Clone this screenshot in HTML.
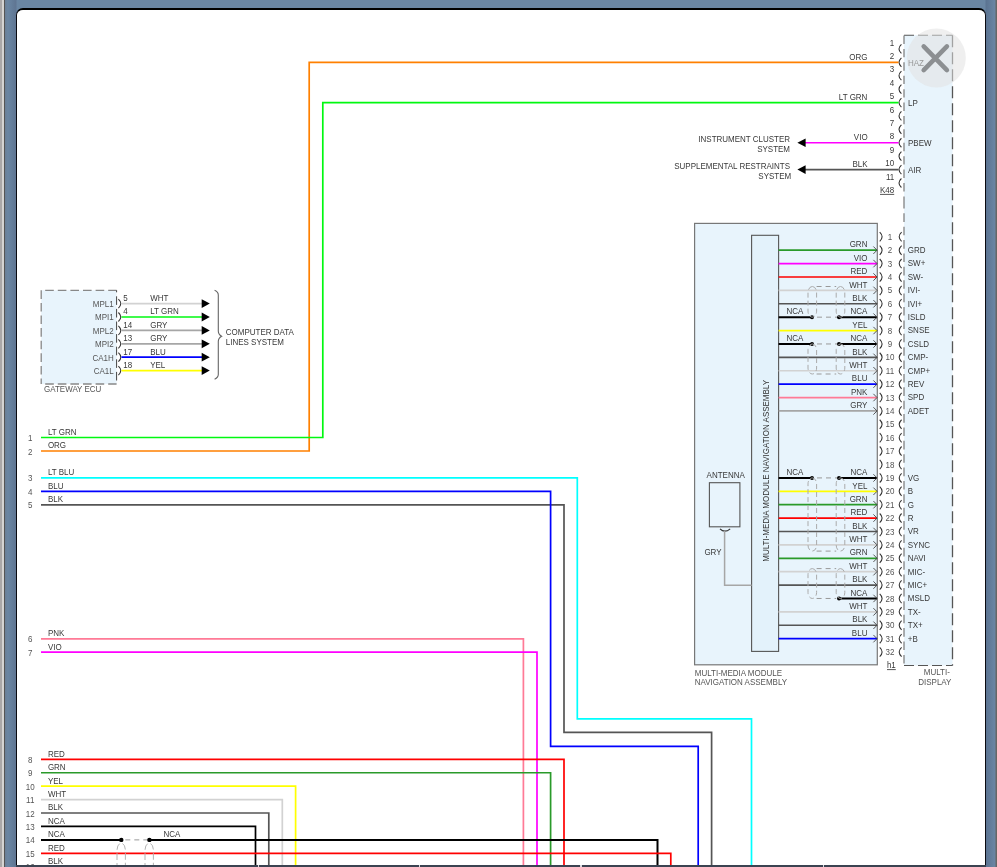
<!DOCTYPE html>
<html><head><meta charset="utf-8"><style>
html,body{margin:0;padding:0;}
body{width:997px;height:867px;overflow:hidden;position:relative;background:linear-gradient(to right,#6a86a3 0px,#6a86a3 8px,#5f7592 16px,#6a86a3 17px,#6a86a3 985px,#5b7391 986px,#6a86a4 995px,#666 996px);font-family:"Liberation Sans",sans-serif;}
#s1{position:absolute;left:0;top:0;width:2px;height:867px;background:#aaa8a8;}
#s2{position:absolute;left:2px;top:0;width:2px;height:867px;background:#d5d4d2;}
#s3{position:absolute;left:4px;top:0;width:1px;height:867px;background:#555;}
#s4{position:absolute;left:5px;top:0;width:3px;height:867px;background:linear-gradient(to right,#6b7f95,#6a86a3);}
#panel{position:absolute;left:16px;top:7.5px;width:968px;height:900px;background:#fff;border:1px solid #0a0a10;border-top:2px solid #000;border-radius:7px 7px 0 0;}
#bar{position:absolute;left:16px;top:865px;width:970px;height:2px;background:#3b4351;}
.gap{position:absolute;top:865px;width:1.5px;height:2px;background:#d8dbe0;}
svg{position:absolute;left:0;top:0;will-change:transform;}
svg text{font-family:"Liberation Sans",sans-serif;}
</style></head><body>
<div id="s1"></div><div id="s2"></div><div id="s3"></div><div id="s4"></div>
<div id="panel"></div>
<svg width="997" height="867" viewBox="0 0 997 867">
<defs><clipPath id="cp"><rect x="17" y="9.5" width="968" height="855.5"/></clipPath></defs>
<g clip-path="url(#cp)">
<rect x="904" y="35.2" width="48.5" height="630.3" fill="#e8f4fc"/>
<path d="M904 35.2 H952.5" stroke="#555" stroke-width="1.1" stroke-dasharray="10 4"/>
<path d="M952.5 35.2 V665.5" stroke="#555" stroke-width="1.3" stroke-dasharray="12 5"/>
<path d="M904 665.5 H952.5" stroke="#555" stroke-width="1.1" stroke-dasharray="10 4"/>
<path d="M904 35.2 V200" stroke="#777" stroke-width="1.2" stroke-dasharray="8.4 5.01" stroke-dashoffset="-0.29"/>
<path d="M904 200 V665.5" stroke="#777" stroke-width="1.2" stroke-dasharray="8.6 4.78" stroke-dashoffset="0.04"/>
<text transform="translate(894.20 45.50) scale(0.9 1)" text-anchor="end" font-size="8.89" fill="#383838" >1</text>
<path d="M901.4 44.40 Q896.6 48.90 901.4 53.40" stroke="#333" stroke-width="1.1" fill="none"/>
<text transform="translate(894.20 58.91) scale(0.9 1)" text-anchor="end" font-size="8.89" fill="#383838" >2</text>
<path d="M901.4 57.81 Q896.6 62.31 901.4 66.81" stroke="#333" stroke-width="1.1" fill="none"/>
<text transform="translate(894.20 72.32) scale(0.9 1)" text-anchor="end" font-size="8.89" fill="#383838" >3</text>
<path d="M901.4 71.22 Q896.6 75.72 901.4 80.22" stroke="#333" stroke-width="1.1" fill="none"/>
<text transform="translate(894.20 85.73) scale(0.9 1)" text-anchor="end" font-size="8.89" fill="#383838" >4</text>
<path d="M901.4 84.63 Q896.6 89.13 901.4 93.63" stroke="#333" stroke-width="1.1" fill="none"/>
<text transform="translate(894.20 99.14) scale(0.9 1)" text-anchor="end" font-size="8.89" fill="#383838" >5</text>
<path d="M901.4 98.04 Q896.6 102.54 901.4 107.04" stroke="#333" stroke-width="1.1" fill="none"/>
<text transform="translate(894.20 112.55) scale(0.9 1)" text-anchor="end" font-size="8.89" fill="#383838" >6</text>
<path d="M901.4 111.45 Q896.6 115.95 901.4 120.45" stroke="#333" stroke-width="1.1" fill="none"/>
<text transform="translate(894.20 125.96) scale(0.9 1)" text-anchor="end" font-size="8.89" fill="#383838" >7</text>
<path d="M901.4 124.86 Q896.6 129.36 901.4 133.86" stroke="#333" stroke-width="1.1" fill="none"/>
<text transform="translate(894.20 139.37) scale(0.9 1)" text-anchor="end" font-size="8.89" fill="#383838" >8</text>
<path d="M901.4 138.27 Q896.6 142.77 901.4 147.27" stroke="#333" stroke-width="1.1" fill="none"/>
<text transform="translate(894.20 152.78) scale(0.9 1)" text-anchor="end" font-size="8.89" fill="#383838" >9</text>
<path d="M901.4 151.68 Q896.6 156.18 901.4 160.68" stroke="#333" stroke-width="1.1" fill="none"/>
<text transform="translate(894.20 166.19) scale(0.9 1)" text-anchor="end" font-size="8.89" fill="#383838" >10</text>
<path d="M901.4 165.09 Q896.6 169.59 901.4 174.09" stroke="#333" stroke-width="1.1" fill="none"/>
<text transform="translate(894.20 179.60) scale(0.9 1)" text-anchor="end" font-size="8.89" fill="#383838" >11</text>
<path d="M901.4 178.50 Q896.6 183.00 901.4 187.50" stroke="#333" stroke-width="1.1" fill="none"/>
<text transform="translate(908.00 65.81) scale(0.9 1)" text-anchor="start" font-size="8.89" fill="#383838" >HAZ</text>
<text transform="translate(908.00 106.04) scale(0.9 1)" text-anchor="start" font-size="8.89" fill="#383838" >LP</text>
<text transform="translate(908.00 146.27) scale(0.9 1)" text-anchor="start" font-size="8.89" fill="#383838" >PBEW</text>
<text transform="translate(908.00 173.09) scale(0.9 1)" text-anchor="start" font-size="8.89" fill="#383838" >AIR</text>
<text transform="translate(894.20 192.60) scale(0.9 1)" text-anchor="end" font-size="8.89" fill="#383838" >K48</text>
<path d="M880 194.4 H894.2" stroke="#444" stroke-width="0.9"/>
<path d="M41 451 H309.2 V62.31 H898.5" stroke="#ff8000" stroke-width="1.7" fill="none" />
<path d="M41 437.5 H322.8 V102.54 H898.5" stroke="#00f810" stroke-width="1.7" fill="none" />
<text transform="translate(867.40 59.51) scale(0.9 1)" text-anchor="end" font-size="8.89" fill="#383838" >ORG</text>
<text transform="translate(867.40 99.74) scale(0.9 1)" text-anchor="end" font-size="8.89" fill="#383838" >LT GRN</text>
<path d="M805 142.77 H898.5" stroke="#ff00ff" stroke-width="1.7" fill="none" />
<path d="M797.4 142.77 L805.6 138.47 L805.6 147.07 Z" fill="#000"/>
<text transform="translate(867.60 139.97) scale(0.9 1)" text-anchor="end" font-size="8.89" fill="#383838" >VIO</text>
<path d="M805 169.59 H898.5" stroke="#555555" stroke-width="1.7" fill="none" />
<path d="M797.4 169.59 L805.6 165.29 L805.6 173.89 Z" fill="#000"/>
<text transform="translate(867.60 166.79) scale(0.9 1)" text-anchor="end" font-size="8.89" fill="#383838" >BLK</text>
<text transform="translate(790.00 142.20) scale(0.9 1)" text-anchor="end" font-size="8.89" fill="#383838" >INSTRUMENT CLUSTER</text>
<text transform="translate(790.00 152.20) scale(0.9 1)" text-anchor="end" font-size="8.89" fill="#383838" >SYSTEM</text>
<text transform="translate(790.00 169.20) scale(0.9 1)" text-anchor="end" font-size="8.89" fill="#383838" >SUPPLEMENTAL RESTRAINTS</text>
<text transform="translate(791.20 179.20) scale(0.9 1)" text-anchor="end" font-size="8.89" fill="#383838" >SYSTEM</text>
<rect x="41.2" y="290.3" width="75.4" height="93.7" fill="#e8f4fc"/>
<path d="M41.2 290.3 H116.6" stroke="#888" stroke-width="1.3" stroke-dasharray="8.6 4" stroke-dashoffset="-4"/>
<path d="M41.2 384 H116.6" stroke="#888" stroke-width="1.3" stroke-dasharray="8.6 4" stroke-dashoffset="-4"/>
<path d="M41.2 290.3 V384" stroke="#888" stroke-width="1.3" stroke-dasharray="8.6 4"/>
<path d="M116.6 290.3 V384" stroke="#444" stroke-width="1" stroke-dasharray="8.6 4" stroke-dashoffset="-6"/>
<text transform="translate(113.70 306.90) scale(0.9 1)" text-anchor="end" font-size="8.89" fill="#555" >MPL1</text>
<path d="M118.4 299.10 Q123.2 303.60 118.4 308.10" stroke="#333" stroke-width="1.1" fill="none"/>
<path d="M121.5 303.60 H203" stroke="#d2d2d2" stroke-width="1.7" fill="none" />
<path d="M209.8 303.60 L201.7 299.20 L201.7 308.00 Z" fill="#000"/>
<text transform="translate(123.30 301.00) scale(0.9 1)" text-anchor="start" font-size="8.89" fill="#383838" >5</text>
<text transform="translate(150.20 301.00) scale(0.9 1)" text-anchor="start" font-size="8.89" fill="#383838" >WHT</text>
<text transform="translate(113.70 320.30) scale(0.9 1)" text-anchor="end" font-size="8.89" fill="#555" >MPI1</text>
<path d="M118.4 312.50 Q123.2 317.00 118.4 321.50" stroke="#333" stroke-width="1.1" fill="none"/>
<path d="M121.5 317.00 H203" stroke="#00f810" stroke-width="1.7" fill="none" />
<path d="M209.8 317.00 L201.7 312.60 L201.7 321.40 Z" fill="#000"/>
<text transform="translate(123.30 314.40) scale(0.9 1)" text-anchor="start" font-size="8.89" fill="#383838" >4</text>
<text transform="translate(150.20 314.40) scale(0.9 1)" text-anchor="start" font-size="8.89" fill="#383838" >LT GRN</text>
<text transform="translate(113.70 333.70) scale(0.9 1)" text-anchor="end" font-size="8.89" fill="#555" >MPL2</text>
<path d="M118.4 325.90 Q123.2 330.40 118.4 334.90" stroke="#333" stroke-width="1.1" fill="none"/>
<path d="M121.5 330.40 H203" stroke="#a6a6a6" stroke-width="1.7" fill="none" />
<path d="M209.8 330.40 L201.7 326.00 L201.7 334.80 Z" fill="#000"/>
<text transform="translate(123.30 327.80) scale(0.9 1)" text-anchor="start" font-size="8.89" fill="#383838" >14</text>
<text transform="translate(150.20 327.80) scale(0.9 1)" text-anchor="start" font-size="8.89" fill="#383838" >GRY</text>
<text transform="translate(113.70 347.10) scale(0.9 1)" text-anchor="end" font-size="8.89" fill="#555" >MPI2</text>
<path d="M118.4 339.30 Q123.2 343.80 118.4 348.30" stroke="#333" stroke-width="1.1" fill="none"/>
<path d="M121.5 343.80 H203" stroke="#a6a6a6" stroke-width="1.7" fill="none" />
<path d="M209.8 343.80 L201.7 339.40 L201.7 348.20 Z" fill="#000"/>
<text transform="translate(123.30 341.20) scale(0.9 1)" text-anchor="start" font-size="8.89" fill="#383838" >13</text>
<text transform="translate(150.20 341.20) scale(0.9 1)" text-anchor="start" font-size="8.89" fill="#383838" >GRY</text>
<text transform="translate(113.70 360.50) scale(0.9 1)" text-anchor="end" font-size="8.89" fill="#555" >CA1H</text>
<path d="M118.4 352.70 Q123.2 357.20 118.4 361.70" stroke="#333" stroke-width="1.1" fill="none"/>
<path d="M121.5 357.20 H203" stroke="#0000ff" stroke-width="1.7" fill="none" />
<path d="M209.8 357.20 L201.7 352.80 L201.7 361.60 Z" fill="#000"/>
<text transform="translate(123.30 354.60) scale(0.9 1)" text-anchor="start" font-size="8.89" fill="#383838" >17</text>
<text transform="translate(150.20 354.60) scale(0.9 1)" text-anchor="start" font-size="8.89" fill="#383838" >BLU</text>
<text transform="translate(113.70 373.90) scale(0.9 1)" text-anchor="end" font-size="8.89" fill="#555" >CA1L</text>
<path d="M118.4 366.10 Q123.2 370.60 118.4 375.10" stroke="#333" stroke-width="1.1" fill="none"/>
<path d="M121.5 370.60 H203" stroke="#ffff00" stroke-width="1.7" fill="none" />
<path d="M209.8 370.60 L201.7 366.20 L201.7 375.00 Z" fill="#000"/>
<text transform="translate(123.30 368.00) scale(0.9 1)" text-anchor="start" font-size="8.89" fill="#383838" >18</text>
<text transform="translate(150.20 368.00) scale(0.9 1)" text-anchor="start" font-size="8.89" fill="#383838" >YEL</text>
<path d="M214.6 290.3 Q218.3 292 218.3 295 V331 Q218.3 334.5 221.6 336.2 Q218.3 338 218.3 341.5 V374.5 Q218.3 377.5 214.6 379.2" stroke="#666" stroke-width="1.1" fill="none"/>
<text transform="translate(225.80 335.00) scale(0.9 1)" text-anchor="start" font-size="8.89" fill="#383838" >COMPUTER DATA</text>
<text transform="translate(225.80 344.60) scale(0.9 1)" text-anchor="start" font-size="8.89" fill="#383838" >LINES SYSTEM</text>
<text transform="translate(44.00 391.50) scale(0.9 1)" text-anchor="start" font-size="8.89" fill="#555" >GATEWAY ECU</text>
<text transform="translate(30.20 441.10) scale(0.9 1)" text-anchor="middle" font-size="8.89" fill="#555" >1</text>
<text transform="translate(47.90 434.90) scale(0.9 1)" text-anchor="start" font-size="8.89" fill="#383838" >LT GRN</text>
<text transform="translate(30.20 454.60) scale(0.9 1)" text-anchor="middle" font-size="8.89" fill="#555" >2</text>
<text transform="translate(47.90 448.40) scale(0.9 1)" text-anchor="start" font-size="8.89" fill="#383838" >ORG</text>
<text transform="translate(30.20 481.40) scale(0.9 1)" text-anchor="middle" font-size="8.89" fill="#555" >3</text>
<text transform="translate(47.90 475.20) scale(0.9 1)" text-anchor="start" font-size="8.89" fill="#383838" >LT BLU</text>
<text transform="translate(30.20 494.90) scale(0.9 1)" text-anchor="middle" font-size="8.89" fill="#555" >4</text>
<text transform="translate(47.90 488.70) scale(0.9 1)" text-anchor="start" font-size="8.89" fill="#383838" >BLU</text>
<text transform="translate(30.20 508.40) scale(0.9 1)" text-anchor="middle" font-size="8.89" fill="#555" >5</text>
<text transform="translate(47.90 502.20) scale(0.9 1)" text-anchor="start" font-size="8.89" fill="#383838" >BLK</text>
<text transform="translate(30.20 642.40) scale(0.9 1)" text-anchor="middle" font-size="8.89" fill="#555" >6</text>
<text transform="translate(47.90 636.20) scale(0.9 1)" text-anchor="start" font-size="8.89" fill="#383838" >PNK</text>
<text transform="translate(30.20 655.70) scale(0.9 1)" text-anchor="middle" font-size="8.89" fill="#555" >7</text>
<text transform="translate(47.90 649.50) scale(0.9 1)" text-anchor="start" font-size="8.89" fill="#383838" >VIO</text>
<text transform="translate(30.20 762.90) scale(0.9 1)" text-anchor="middle" font-size="8.89" fill="#555" >8</text>
<text transform="translate(47.90 756.70) scale(0.9 1)" text-anchor="start" font-size="8.89" fill="#383838" >RED</text>
<text transform="translate(30.20 776.33) scale(0.9 1)" text-anchor="middle" font-size="8.89" fill="#555" >9</text>
<text transform="translate(47.90 770.13) scale(0.9 1)" text-anchor="start" font-size="8.89" fill="#383838" >GRN</text>
<text transform="translate(30.20 789.76) scale(0.9 1)" text-anchor="middle" font-size="8.89" fill="#555" >10</text>
<text transform="translate(47.90 783.56) scale(0.9 1)" text-anchor="start" font-size="8.89" fill="#383838" >YEL</text>
<text transform="translate(30.20 803.19) scale(0.9 1)" text-anchor="middle" font-size="8.89" fill="#555" >11</text>
<text transform="translate(47.90 796.99) scale(0.9 1)" text-anchor="start" font-size="8.89" fill="#383838" >WHT</text>
<text transform="translate(30.20 816.62) scale(0.9 1)" text-anchor="middle" font-size="8.89" fill="#555" >12</text>
<text transform="translate(47.90 810.42) scale(0.9 1)" text-anchor="start" font-size="8.89" fill="#383838" >BLK</text>
<text transform="translate(30.20 830.05) scale(0.9 1)" text-anchor="middle" font-size="8.89" fill="#555" >13</text>
<text transform="translate(47.90 823.85) scale(0.9 1)" text-anchor="start" font-size="8.89" fill="#383838" >NCA</text>
<text transform="translate(30.20 843.48) scale(0.9 1)" text-anchor="middle" font-size="8.89" fill="#555" >14</text>
<text transform="translate(47.90 837.28) scale(0.9 1)" text-anchor="start" font-size="8.89" fill="#383838" >NCA</text>
<text transform="translate(30.20 856.91) scale(0.9 1)" text-anchor="middle" font-size="8.89" fill="#555" >15</text>
<text transform="translate(47.90 850.71) scale(0.9 1)" text-anchor="start" font-size="8.89" fill="#383838" >RED</text>
<text transform="translate(30.20 870.34) scale(0.9 1)" text-anchor="middle" font-size="8.89" fill="#555" >16</text>
<text transform="translate(47.90 864.14) scale(0.9 1)" text-anchor="start" font-size="8.89" fill="#383838" >BLK</text>
<path d="M41 477.8 H577.3 V718.8 H751.5 V870" stroke="#00ffff" stroke-width="1.7" fill="none" />
<path d="M41 504.8 H564 V732.4 H711.6 V870" stroke="#555555" stroke-width="1.7" fill="none" />
<path d="M41 491.3 H550.6 V746.3 H698.2 V870" stroke="#0000ff" stroke-width="1.7" fill="none" />
<path d="M41 638.8 H523.4 V870" stroke="#ff7a96" stroke-width="1.7" fill="none" />
<path d="M41 652.1 H537 V870" stroke="#ff00ff" stroke-width="1.7" fill="none" />
<path d="M41 759.30 H564 V870" stroke="#ff0000" stroke-width="1.7" fill="none" />
<path d="M41 772.73 H550.6 V870" stroke="#2a9a2a" stroke-width="1.7" fill="none" />
<path d="M41 786.16 H295.6 V870" stroke="#ffff00" stroke-width="1.7" fill="none" />
<path d="M41 799.59 H282.3 V870" stroke="#d2d2d2" stroke-width="1.7" fill="none" />
<path d="M41 813.02 H268.8 V870" stroke="#555555" stroke-width="1.7" fill="none" />
<path d="M41 826.45 H255.5 V870" stroke="#000000" stroke-width="1.7" fill="none" />
<path d="M41 839.88 H121.3" stroke="#000000" stroke-width="2" fill="none" />
<path d="M149.4 839.88 H657.5 V870" stroke="#000000" stroke-width="2" fill="none" />
<path d="M121.3 839.88 H149.4" stroke="#999" stroke-width="1" stroke-dasharray="5 4" stroke-dashoffset="-4"/>
<circle cx="121.3" cy="839.88" r="2.2" fill="#000"/><circle cx="149.4" cy="839.88" r="2.2" fill="#000"/>
<path d="M41 853.31 H670.8 V870" stroke="#ff0000" stroke-width="1.7" fill="none" />
<path d="M41 866.74 H700" stroke="#555555" stroke-width="1.7" fill="none" />
<text transform="translate(163.40 837.30) scale(0.9 1)" text-anchor="start" font-size="8.89" fill="#383838" >NCA</text>
<path d="M117 870 V851 Q117 844 121.2 843 Q125.4 844 125.4 851 V870" stroke="#aaa" stroke-width="0.9" fill="none" stroke-dasharray="7 3"/>
<path d="M145 870 V851 Q145 844 149.2 843 Q153.4 844 153.4 851 V870" stroke="#aaa" stroke-width="0.9" fill="none" stroke-dasharray="7 3"/>
<rect x="694.6" y="223.4" width="182.7" height="441.4" fill="#e8f4fc" stroke="#777" stroke-width="1.2"/>
<rect x="751.6" y="235.3" width="27" height="416.1" fill="#e3f2fb" stroke="#555" stroke-width="1.1"/>
<text transform="translate(769.2 561.7) rotate(-90) scale(0.9 1)" font-size="8.89" fill="#333">MULTI-MEDIA MODULE NAVIGATION ASSEMBLY</text>
<text transform="translate(694.80 676.00) scale(0.9 1)" text-anchor="start" font-size="8.89" fill="#555" >MULTI-MEDIA MODULE</text>
<text transform="translate(694.80 684.60) scale(0.9 1)" text-anchor="start" font-size="8.89" fill="#555" >NAVIGATION ASSEMBLY</text>
<text transform="translate(949.80 675.30) scale(0.9 1)" text-anchor="end" font-size="8.89" fill="#555" >MULTI-</text>
<text transform="translate(951.40 684.80) scale(0.9 1)" text-anchor="end" font-size="8.89" fill="#555" >DISPLAY</text>
<text transform="translate(895.80 667.70) scale(0.9 1)" text-anchor="end" font-size="8.89" fill="#383838" >h1</text>
<path d="M887 669.6 H895.8" stroke="#444" stroke-width="0.9"/>
<text transform="translate(706.60 477.80) scale(0.9 1)" text-anchor="start" font-size="8.89" fill="#383838" >ANTENNA</text>
<rect x="709.4" y="482.7" width="30.5" height="44.1" fill="#e8f4fc" stroke="#555" stroke-width="1.1"/>
<path d="M720 528.8 Q724.6 533.5 730.2 528.8" stroke="#333" stroke-width="1.1" fill="none"/>
<path d="M724.6 531 V585.2 H751.6" stroke="#a6a6a6" stroke-width="1.5" fill="none" />
<text transform="translate(704.40 555.30) scale(0.9 1)" text-anchor="start" font-size="8.89" fill="#383838" >GRY</text>
<path d="M879.7 232.20 Q884.5 236.80 879.7 241.40" stroke="#333" stroke-width="1.1" fill="none"/>
<path d="M901.6 232.20 Q896.8 236.80 901.6 241.40" stroke="#333" stroke-width="1.1" fill="none"/>
<text transform="translate(890.00 239.90) scale(0.9 1)" text-anchor="middle" font-size="8.89" fill="#555" >1</text>
<path d="M879.7 245.60 Q884.5 250.20 879.7 254.80" stroke="#333" stroke-width="1.1" fill="none"/>
<path d="M901.6 245.60 Q896.8 250.20 901.6 254.80" stroke="#333" stroke-width="1.1" fill="none"/>
<text transform="translate(890.00 253.30) scale(0.9 1)" text-anchor="middle" font-size="8.89" fill="#555" >2</text>
<path d="M879.7 258.99 Q884.5 263.59 879.7 268.19" stroke="#333" stroke-width="1.1" fill="none"/>
<path d="M901.6 258.99 Q896.8 263.59 901.6 268.19" stroke="#333" stroke-width="1.1" fill="none"/>
<text transform="translate(890.00 266.69) scale(0.9 1)" text-anchor="middle" font-size="8.89" fill="#555" >3</text>
<path d="M879.7 272.38 Q884.5 276.99 879.7 281.59" stroke="#333" stroke-width="1.1" fill="none"/>
<path d="M901.6 272.38 Q896.8 276.99 901.6 281.59" stroke="#333" stroke-width="1.1" fill="none"/>
<text transform="translate(890.00 280.09) scale(0.9 1)" text-anchor="middle" font-size="8.89" fill="#555" >4</text>
<path d="M879.7 285.78 Q884.5 290.38 879.7 294.98" stroke="#333" stroke-width="1.1" fill="none"/>
<path d="M901.6 285.78 Q896.8 290.38 901.6 294.98" stroke="#333" stroke-width="1.1" fill="none"/>
<text transform="translate(890.00 293.48) scale(0.9 1)" text-anchor="middle" font-size="8.89" fill="#555" >5</text>
<path d="M879.7 299.17 Q884.5 303.77 879.7 308.38" stroke="#333" stroke-width="1.1" fill="none"/>
<path d="M901.6 299.17 Q896.8 303.77 901.6 308.38" stroke="#333" stroke-width="1.1" fill="none"/>
<text transform="translate(890.00 306.88) scale(0.9 1)" text-anchor="middle" font-size="8.89" fill="#555" >6</text>
<path d="M879.7 312.57 Q884.5 317.17 879.7 321.77" stroke="#333" stroke-width="1.1" fill="none"/>
<path d="M901.6 312.57 Q896.8 317.17 901.6 321.77" stroke="#333" stroke-width="1.1" fill="none"/>
<text transform="translate(890.00 320.27) scale(0.9 1)" text-anchor="middle" font-size="8.89" fill="#555" >7</text>
<path d="M879.7 325.96 Q884.5 330.56 879.7 335.17" stroke="#333" stroke-width="1.1" fill="none"/>
<path d="M901.6 325.96 Q896.8 330.56 901.6 335.17" stroke="#333" stroke-width="1.1" fill="none"/>
<text transform="translate(890.00 333.67) scale(0.9 1)" text-anchor="middle" font-size="8.89" fill="#555" >8</text>
<path d="M879.7 339.36 Q884.5 343.96 879.7 348.56" stroke="#333" stroke-width="1.1" fill="none"/>
<path d="M901.6 339.36 Q896.8 343.96 901.6 348.56" stroke="#333" stroke-width="1.1" fill="none"/>
<text transform="translate(890.00 347.06) scale(0.9 1)" text-anchor="middle" font-size="8.89" fill="#555" >9</text>
<path d="M879.7 352.75 Q884.5 357.36 879.7 361.96" stroke="#333" stroke-width="1.1" fill="none"/>
<path d="M901.6 352.75 Q896.8 357.36 901.6 361.96" stroke="#333" stroke-width="1.1" fill="none"/>
<text transform="translate(890.00 360.46) scale(0.9 1)" text-anchor="middle" font-size="8.89" fill="#555" >10</text>
<path d="M879.7 366.15 Q884.5 370.75 879.7 375.35" stroke="#333" stroke-width="1.1" fill="none"/>
<path d="M901.6 366.15 Q896.8 370.75 901.6 375.35" stroke="#333" stroke-width="1.1" fill="none"/>
<text transform="translate(890.00 373.85) scale(0.9 1)" text-anchor="middle" font-size="8.89" fill="#555" >11</text>
<path d="M879.7 379.54 Q884.5 384.14 879.7 388.75" stroke="#333" stroke-width="1.1" fill="none"/>
<path d="M901.6 379.54 Q896.8 384.14 901.6 388.75" stroke="#333" stroke-width="1.1" fill="none"/>
<text transform="translate(890.00 387.25) scale(0.9 1)" text-anchor="middle" font-size="8.89" fill="#555" >12</text>
<path d="M879.7 392.94 Q884.5 397.54 879.7 402.14" stroke="#333" stroke-width="1.1" fill="none"/>
<path d="M901.6 392.94 Q896.8 397.54 901.6 402.14" stroke="#333" stroke-width="1.1" fill="none"/>
<text transform="translate(890.00 400.64) scale(0.9 1)" text-anchor="middle" font-size="8.89" fill="#555" >13</text>
<path d="M879.7 406.33 Q884.5 410.94 879.7 415.54" stroke="#333" stroke-width="1.1" fill="none"/>
<path d="M901.6 406.33 Q896.8 410.94 901.6 415.54" stroke="#333" stroke-width="1.1" fill="none"/>
<text transform="translate(890.00 414.04) scale(0.9 1)" text-anchor="middle" font-size="8.89" fill="#555" >14</text>
<path d="M879.7 419.73 Q884.5 424.33 879.7 428.93" stroke="#333" stroke-width="1.1" fill="none"/>
<path d="M901.6 419.73 Q896.8 424.33 901.6 428.93" stroke="#333" stroke-width="1.1" fill="none"/>
<text transform="translate(890.00 427.43) scale(0.9 1)" text-anchor="middle" font-size="8.89" fill="#555" >15</text>
<path d="M879.7 433.12 Q884.5 437.73 879.7 442.33" stroke="#333" stroke-width="1.1" fill="none"/>
<path d="M901.6 433.12 Q896.8 437.73 901.6 442.33" stroke="#333" stroke-width="1.1" fill="none"/>
<text transform="translate(890.00 440.83) scale(0.9 1)" text-anchor="middle" font-size="8.89" fill="#555" >16</text>
<path d="M879.7 446.52 Q884.5 451.12 879.7 455.72" stroke="#333" stroke-width="1.1" fill="none"/>
<path d="M901.6 446.52 Q896.8 451.12 901.6 455.72" stroke="#333" stroke-width="1.1" fill="none"/>
<text transform="translate(890.00 454.22) scale(0.9 1)" text-anchor="middle" font-size="8.89" fill="#555" >17</text>
<path d="M879.7 459.91 Q884.5 464.51 879.7 469.12" stroke="#333" stroke-width="1.1" fill="none"/>
<path d="M901.6 459.91 Q896.8 464.51 901.6 469.12" stroke="#333" stroke-width="1.1" fill="none"/>
<text transform="translate(890.00 467.62) scale(0.9 1)" text-anchor="middle" font-size="8.89" fill="#555" >18</text>
<path d="M879.7 473.31 Q884.5 477.91 879.7 482.51" stroke="#333" stroke-width="1.1" fill="none"/>
<path d="M901.6 473.31 Q896.8 477.91 901.6 482.51" stroke="#333" stroke-width="1.1" fill="none"/>
<text transform="translate(890.00 481.01) scale(0.9 1)" text-anchor="middle" font-size="8.89" fill="#555" >19</text>
<path d="M879.7 486.70 Q884.5 491.31 879.7 495.91" stroke="#333" stroke-width="1.1" fill="none"/>
<path d="M901.6 486.70 Q896.8 491.31 901.6 495.91" stroke="#333" stroke-width="1.1" fill="none"/>
<text transform="translate(890.00 494.41) scale(0.9 1)" text-anchor="middle" font-size="8.89" fill="#555" >20</text>
<path d="M879.7 500.10 Q884.5 504.70 879.7 509.30" stroke="#333" stroke-width="1.1" fill="none"/>
<path d="M901.6 500.10 Q896.8 504.70 901.6 509.30" stroke="#333" stroke-width="1.1" fill="none"/>
<text transform="translate(890.00 507.80) scale(0.9 1)" text-anchor="middle" font-size="8.89" fill="#555" >21</text>
<path d="M879.7 513.50 Q884.5 518.10 879.7 522.70" stroke="#333" stroke-width="1.1" fill="none"/>
<path d="M901.6 513.50 Q896.8 518.10 901.6 522.70" stroke="#333" stroke-width="1.1" fill="none"/>
<text transform="translate(890.00 521.20) scale(0.9 1)" text-anchor="middle" font-size="8.89" fill="#555" >22</text>
<path d="M879.7 526.89 Q884.5 531.49 879.7 536.09" stroke="#333" stroke-width="1.1" fill="none"/>
<path d="M901.6 526.89 Q896.8 531.49 901.6 536.09" stroke="#333" stroke-width="1.1" fill="none"/>
<text transform="translate(890.00 534.59) scale(0.9 1)" text-anchor="middle" font-size="8.89" fill="#555" >23</text>
<path d="M879.7 540.28 Q884.5 544.88 879.7 549.49" stroke="#333" stroke-width="1.1" fill="none"/>
<path d="M901.6 540.28 Q896.8 544.88 901.6 549.49" stroke="#333" stroke-width="1.1" fill="none"/>
<text transform="translate(890.00 547.99) scale(0.9 1)" text-anchor="middle" font-size="8.89" fill="#555" >24</text>
<path d="M879.7 553.68 Q884.5 558.28 879.7 562.88" stroke="#333" stroke-width="1.1" fill="none"/>
<path d="M901.6 553.68 Q896.8 558.28 901.6 562.88" stroke="#333" stroke-width="1.1" fill="none"/>
<text transform="translate(890.00 561.38) scale(0.9 1)" text-anchor="middle" font-size="8.89" fill="#555" >25</text>
<path d="M879.7 567.07 Q884.5 571.67 879.7 576.27" stroke="#333" stroke-width="1.1" fill="none"/>
<path d="M901.6 567.07 Q896.8 571.67 901.6 576.27" stroke="#333" stroke-width="1.1" fill="none"/>
<text transform="translate(890.00 574.77) scale(0.9 1)" text-anchor="middle" font-size="8.89" fill="#555" >26</text>
<path d="M879.7 580.47 Q884.5 585.07 879.7 589.67" stroke="#333" stroke-width="1.1" fill="none"/>
<path d="M901.6 580.47 Q896.8 585.07 901.6 589.67" stroke="#333" stroke-width="1.1" fill="none"/>
<text transform="translate(890.00 588.17) scale(0.9 1)" text-anchor="middle" font-size="8.89" fill="#555" >27</text>
<path d="M879.7 593.86 Q884.5 598.46 879.7 603.06" stroke="#333" stroke-width="1.1" fill="none"/>
<path d="M901.6 593.86 Q896.8 598.46 901.6 603.06" stroke="#333" stroke-width="1.1" fill="none"/>
<text transform="translate(890.00 601.56) scale(0.9 1)" text-anchor="middle" font-size="8.89" fill="#555" >28</text>
<path d="M879.7 607.26 Q884.5 611.86 879.7 616.46" stroke="#333" stroke-width="1.1" fill="none"/>
<path d="M901.6 607.26 Q896.8 611.86 901.6 616.46" stroke="#333" stroke-width="1.1" fill="none"/>
<text transform="translate(890.00 614.96) scale(0.9 1)" text-anchor="middle" font-size="8.89" fill="#555" >29</text>
<path d="M879.7 620.65 Q884.5 625.25 879.7 629.86" stroke="#333" stroke-width="1.1" fill="none"/>
<path d="M901.6 620.65 Q896.8 625.25 901.6 629.86" stroke="#333" stroke-width="1.1" fill="none"/>
<text transform="translate(890.00 628.36) scale(0.9 1)" text-anchor="middle" font-size="8.89" fill="#555" >30</text>
<path d="M879.7 634.05 Q884.5 638.65 879.7 643.25" stroke="#333" stroke-width="1.1" fill="none"/>
<path d="M901.6 634.05 Q896.8 638.65 901.6 643.25" stroke="#333" stroke-width="1.1" fill="none"/>
<text transform="translate(890.00 641.75) scale(0.9 1)" text-anchor="middle" font-size="8.89" fill="#555" >31</text>
<path d="M879.7 647.45 Q884.5 652.05 879.7 656.65" stroke="#333" stroke-width="1.1" fill="none"/>
<path d="M901.6 647.45 Q896.8 652.05 901.6 656.65" stroke="#333" stroke-width="1.1" fill="none"/>
<text transform="translate(890.00 655.15) scale(0.9 1)" text-anchor="middle" font-size="8.89" fill="#555" >32</text>
<text transform="translate(907.80 253.10) scale(0.9 1)" text-anchor="start" font-size="8.89" fill="#383838" >GRD</text>
<text transform="translate(907.80 266.49) scale(0.9 1)" text-anchor="start" font-size="8.89" fill="#383838" >SW+</text>
<text transform="translate(907.80 279.88) scale(0.9 1)" text-anchor="start" font-size="8.89" fill="#383838" >SW-</text>
<text transform="translate(907.80 293.28) scale(0.9 1)" text-anchor="start" font-size="8.89" fill="#383838" >IVI-</text>
<text transform="translate(907.80 306.67) scale(0.9 1)" text-anchor="start" font-size="8.89" fill="#383838" >IVI+</text>
<text transform="translate(907.80 320.07) scale(0.9 1)" text-anchor="start" font-size="8.89" fill="#383838" >ISLD</text>
<text transform="translate(907.80 333.46) scale(0.9 1)" text-anchor="start" font-size="8.89" fill="#383838" >SNSE</text>
<text transform="translate(907.80 346.86) scale(0.9 1)" text-anchor="start" font-size="8.89" fill="#383838" >CSLD</text>
<text transform="translate(907.80 360.25) scale(0.9 1)" text-anchor="start" font-size="8.89" fill="#383838" >CMP-</text>
<text transform="translate(907.80 373.65) scale(0.9 1)" text-anchor="start" font-size="8.89" fill="#383838" >CMP+</text>
<text transform="translate(907.80 387.04) scale(0.9 1)" text-anchor="start" font-size="8.89" fill="#383838" >REV</text>
<text transform="translate(907.80 400.44) scale(0.9 1)" text-anchor="start" font-size="8.89" fill="#383838" >SPD</text>
<text transform="translate(907.80 413.83) scale(0.9 1)" text-anchor="start" font-size="8.89" fill="#383838" >ADET</text>
<text transform="translate(907.80 480.81) scale(0.9 1)" text-anchor="start" font-size="8.89" fill="#383838" >VG</text>
<text transform="translate(907.80 494.20) scale(0.9 1)" text-anchor="start" font-size="8.89" fill="#383838" >B</text>
<text transform="translate(907.80 507.60) scale(0.9 1)" text-anchor="start" font-size="8.89" fill="#383838" >G</text>
<text transform="translate(907.80 521.00) scale(0.9 1)" text-anchor="start" font-size="8.89" fill="#383838" >R</text>
<text transform="translate(907.80 534.39) scale(0.9 1)" text-anchor="start" font-size="8.89" fill="#383838" >VR</text>
<text transform="translate(907.80 547.78) scale(0.9 1)" text-anchor="start" font-size="8.89" fill="#383838" >SYNC</text>
<text transform="translate(907.80 561.18) scale(0.9 1)" text-anchor="start" font-size="8.89" fill="#383838" >NAVI</text>
<text transform="translate(907.80 574.57) scale(0.9 1)" text-anchor="start" font-size="8.89" fill="#383838" >MIC-</text>
<text transform="translate(907.80 587.97) scale(0.9 1)" text-anchor="start" font-size="8.89" fill="#383838" >MIC+</text>
<text transform="translate(907.80 601.36) scale(0.9 1)" text-anchor="start" font-size="8.89" fill="#383838" >MSLD</text>
<text transform="translate(907.80 614.76) scale(0.9 1)" text-anchor="start" font-size="8.89" fill="#383838" >TX-</text>
<text transform="translate(907.80 628.15) scale(0.9 1)" text-anchor="start" font-size="8.89" fill="#383838" >TX+</text>
<text transform="translate(907.80 641.55) scale(0.9 1)" text-anchor="start" font-size="8.89" fill="#383838" >+B</text>
<path d="M778.6 250.20 H877" stroke="#2a9a2a" stroke-width="1.7" fill="none" />
<path d="M873.4 246.50 L877 250.20 L873.4 253.90" stroke="#444" stroke-width="0.9" fill="none"/>
<text transform="translate(867.40 247.40) scale(0.9 1)" text-anchor="end" font-size="8.89" fill="#383838" >GRN</text>
<path d="M778.6 263.59 H877" stroke="#ff00ff" stroke-width="1.7" fill="none" />
<path d="M873.4 259.89 L877 263.59 L873.4 267.29" stroke="#444" stroke-width="0.9" fill="none"/>
<text transform="translate(867.40 260.79) scale(0.9 1)" text-anchor="end" font-size="8.89" fill="#383838" >VIO</text>
<path d="M778.6 276.99 H877" stroke="#ff0000" stroke-width="1.7" fill="none" />
<path d="M873.4 273.29 L877 276.99 L873.4 280.69" stroke="#444" stroke-width="0.9" fill="none"/>
<text transform="translate(867.40 274.19) scale(0.9 1)" text-anchor="end" font-size="8.89" fill="#383838" >RED</text>
<path d="M778.6 290.38 H877" stroke="#d2d2d2" stroke-width="1.7" fill="none" />
<path d="M873.4 286.68 L877 290.38 L873.4 294.08" stroke="#444" stroke-width="0.9" fill="none"/>
<text transform="translate(867.40 287.58) scale(0.9 1)" text-anchor="end" font-size="8.89" fill="#383838" >WHT</text>
<path d="M778.6 303.77 H877" stroke="#555555" stroke-width="1.7" fill="none" />
<path d="M873.4 300.07 L877 303.77 L873.4 307.47" stroke="#444" stroke-width="0.9" fill="none"/>
<text transform="translate(867.40 300.97) scale(0.9 1)" text-anchor="end" font-size="8.89" fill="#383838" >BLK</text>
<path d="M778.6 317.17 H812" stroke="#000" stroke-width="2" fill="none" />
<text transform="translate(786.50 314.37) scale(0.9 1)" text-anchor="start" font-size="8.89" fill="#383838" >NCA</text>
<circle cx="812" cy="317.17" r="2" fill="#000"/>
<path d="M814 317.17 H837" stroke="#999" stroke-width="1" stroke-dasharray="5 4" stroke-dashoffset="-3"/>
<path d="M839 317.17 H877" stroke="#000" stroke-width="2" fill="none" />
<circle cx="839" cy="317.17" r="2" fill="#000"/>
<path d="M873.4 313.47 L877 317.17 L873.4 320.87" stroke="#444" stroke-width="0.9" fill="none"/>
<text transform="translate(867.40 314.37) scale(0.9 1)" text-anchor="end" font-size="8.89" fill="#383838" >NCA</text>
<path d="M778.6 330.56 H877" stroke="#ffff00" stroke-width="1.7" fill="none" />
<path d="M873.4 326.87 L877 330.56 L873.4 334.26" stroke="#444" stroke-width="0.9" fill="none"/>
<text transform="translate(867.40 327.76) scale(0.9 1)" text-anchor="end" font-size="8.89" fill="#383838" >YEL</text>
<path d="M778.6 343.96 H812" stroke="#000" stroke-width="2" fill="none" />
<text transform="translate(786.50 341.16) scale(0.9 1)" text-anchor="start" font-size="8.89" fill="#383838" >NCA</text>
<circle cx="812" cy="343.96" r="2" fill="#000"/>
<path d="M814 343.96 H837" stroke="#999" stroke-width="1" stroke-dasharray="5 4" stroke-dashoffset="-3"/>
<path d="M839 343.96 H877" stroke="#000" stroke-width="2" fill="none" />
<circle cx="839" cy="343.96" r="2" fill="#000"/>
<path d="M873.4 340.26 L877 343.96 L873.4 347.66" stroke="#444" stroke-width="0.9" fill="none"/>
<text transform="translate(867.40 341.16) scale(0.9 1)" text-anchor="end" font-size="8.89" fill="#383838" >NCA</text>
<path d="M778.6 357.36 H877" stroke="#555555" stroke-width="1.7" fill="none" />
<path d="M873.4 353.66 L877 357.36 L873.4 361.06" stroke="#444" stroke-width="0.9" fill="none"/>
<text transform="translate(867.40 354.56) scale(0.9 1)" text-anchor="end" font-size="8.89" fill="#383838" >BLK</text>
<path d="M778.6 370.75 H877" stroke="#d2d2d2" stroke-width="1.7" fill="none" />
<path d="M873.4 367.05 L877 370.75 L873.4 374.45" stroke="#444" stroke-width="0.9" fill="none"/>
<text transform="translate(867.40 367.95) scale(0.9 1)" text-anchor="end" font-size="8.89" fill="#383838" >WHT</text>
<path d="M778.6 384.14 H877" stroke="#0000ff" stroke-width="1.7" fill="none" />
<path d="M873.4 380.44 L877 384.14 L873.4 387.84" stroke="#444" stroke-width="0.9" fill="none"/>
<text transform="translate(867.40 381.34) scale(0.9 1)" text-anchor="end" font-size="8.89" fill="#383838" >BLU</text>
<path d="M778.6 397.54 H877" stroke="#ff7a96" stroke-width="1.7" fill="none" />
<path d="M873.4 393.84 L877 397.54 L873.4 401.24" stroke="#444" stroke-width="0.9" fill="none"/>
<text transform="translate(867.40 394.74) scale(0.9 1)" text-anchor="end" font-size="8.89" fill="#383838" >PNK</text>
<path d="M778.6 410.94 H877" stroke="#a6a6a6" stroke-width="1.7" fill="none" />
<path d="M873.4 407.24 L877 410.94 L873.4 414.63" stroke="#444" stroke-width="0.9" fill="none"/>
<text transform="translate(867.40 408.13) scale(0.9 1)" text-anchor="end" font-size="8.89" fill="#383838" >GRY</text>
<path d="M778.6 477.91 H812" stroke="#000" stroke-width="2" fill="none" />
<text transform="translate(786.50 475.11) scale(0.9 1)" text-anchor="start" font-size="8.89" fill="#383838" >NCA</text>
<circle cx="812" cy="477.91" r="2" fill="#000"/>
<path d="M814 477.91 H837" stroke="#999" stroke-width="1" stroke-dasharray="5 4" stroke-dashoffset="-3"/>
<path d="M839 477.91 H877" stroke="#000" stroke-width="2" fill="none" />
<circle cx="839" cy="477.91" r="2" fill="#000"/>
<path d="M873.4 474.21 L877 477.91 L873.4 481.61" stroke="#444" stroke-width="0.9" fill="none"/>
<text transform="translate(867.40 475.11) scale(0.9 1)" text-anchor="end" font-size="8.89" fill="#383838" >NCA</text>
<path d="M778.6 491.31 H877" stroke="#ffff00" stroke-width="1.7" fill="none" />
<path d="M873.4 487.61 L877 491.31 L873.4 495.00" stroke="#444" stroke-width="0.9" fill="none"/>
<text transform="translate(867.40 488.50) scale(0.9 1)" text-anchor="end" font-size="8.89" fill="#383838" >YEL</text>
<path d="M778.6 504.70 H877" stroke="#2a9a2a" stroke-width="1.7" fill="none" />
<path d="M873.4 501.00 L877 504.70 L873.4 508.40" stroke="#444" stroke-width="0.9" fill="none"/>
<text transform="translate(867.40 501.90) scale(0.9 1)" text-anchor="end" font-size="8.89" fill="#383838" >GRN</text>
<path d="M778.6 518.10 H877" stroke="#ff0000" stroke-width="1.7" fill="none" />
<path d="M873.4 514.39 L877 518.10 L873.4 521.80" stroke="#444" stroke-width="0.9" fill="none"/>
<text transform="translate(867.40 515.30) scale(0.9 1)" text-anchor="end" font-size="8.89" fill="#383838" >RED</text>
<path d="M778.6 531.49 H877" stroke="#555555" stroke-width="1.7" fill="none" />
<path d="M873.4 527.79 L877 531.49 L873.4 535.19" stroke="#444" stroke-width="0.9" fill="none"/>
<text transform="translate(867.40 528.69) scale(0.9 1)" text-anchor="end" font-size="8.89" fill="#383838" >BLK</text>
<path d="M778.6 544.88 H877" stroke="#d2d2d2" stroke-width="1.7" fill="none" />
<path d="M873.4 541.18 L877 544.88 L873.4 548.59" stroke="#444" stroke-width="0.9" fill="none"/>
<text transform="translate(867.40 542.09) scale(0.9 1)" text-anchor="end" font-size="8.89" fill="#383838" >WHT</text>
<path d="M778.6 558.28 H877" stroke="#2a9a2a" stroke-width="1.7" fill="none" />
<path d="M873.4 554.58 L877 558.28 L873.4 561.98" stroke="#444" stroke-width="0.9" fill="none"/>
<text transform="translate(867.40 555.48) scale(0.9 1)" text-anchor="end" font-size="8.89" fill="#383838" >GRN</text>
<path d="M778.6 571.67 H877" stroke="#d2d2d2" stroke-width="1.7" fill="none" />
<path d="M873.4 567.97 L877 571.67 L873.4 575.38" stroke="#444" stroke-width="0.9" fill="none"/>
<text transform="translate(867.40 568.88) scale(0.9 1)" text-anchor="end" font-size="8.89" fill="#383838" >WHT</text>
<path d="M778.6 585.07 H877" stroke="#555555" stroke-width="1.7" fill="none" />
<path d="M873.4 581.37 L877 585.07 L873.4 588.77" stroke="#444" stroke-width="0.9" fill="none"/>
<text transform="translate(867.40 582.27) scale(0.9 1)" text-anchor="end" font-size="8.89" fill="#383838" >BLK</text>
<path d="M839 598.46 H877" stroke="#000" stroke-width="2" fill="none" />
<circle cx="839" cy="598.46" r="2" fill="#000"/>
<path d="M873.4 594.76 L877 598.46 L873.4 602.16" stroke="#444" stroke-width="0.9" fill="none"/>
<text transform="translate(867.40 595.66) scale(0.9 1)" text-anchor="end" font-size="8.89" fill="#383838" >NCA</text>
<path d="M778.6 611.86 H877" stroke="#d2d2d2" stroke-width="1.7" fill="none" />
<path d="M873.4 608.16 L877 611.86 L873.4 615.56" stroke="#444" stroke-width="0.9" fill="none"/>
<text transform="translate(867.40 609.06) scale(0.9 1)" text-anchor="end" font-size="8.89" fill="#383838" >WHT</text>
<path d="M778.6 625.25 H877" stroke="#555555" stroke-width="1.7" fill="none" />
<path d="M873.4 621.55 L877 625.25 L873.4 628.96" stroke="#444" stroke-width="0.9" fill="none"/>
<text transform="translate(867.40 622.46) scale(0.9 1)" text-anchor="end" font-size="8.89" fill="#383838" >BLK</text>
<path d="M778.6 638.65 H877" stroke="#0000ff" stroke-width="1.7" fill="none" />
<path d="M873.4 634.95 L877 638.65 L873.4 642.35" stroke="#444" stroke-width="0.9" fill="none"/>
<text transform="translate(867.40 635.85) scale(0.9 1)" text-anchor="end" font-size="8.89" fill="#383838" >BLU</text>
<rect x="808" y="286.50" width="8.6" height="30.67" rx="4.3" ry="6" fill="none" stroke="#aaa" stroke-width="1" stroke-dasharray="5 3"/>
<rect x="836.2" y="286.50" width="8.6" height="30.67" rx="4.3" ry="6" fill="none" stroke="#aaa" stroke-width="1" stroke-dasharray="5 3"/>
<path d="M816.6 286.50 H836.2" stroke="#999" stroke-width="1" stroke-dasharray="5 4"/>
<rect x="808" y="343.96" width="8.6" height="30.04" rx="4.3" ry="6" fill="none" stroke="#aaa" stroke-width="1" stroke-dasharray="5 3"/>
<rect x="836.2" y="343.96" width="8.6" height="30.04" rx="4.3" ry="6" fill="none" stroke="#aaa" stroke-width="1" stroke-dasharray="5 3"/>
<path d="M816.6 374.00 H836.2" stroke="#999" stroke-width="1" stroke-dasharray="5 4"/>
<rect x="808" y="477.91" width="8.6" height="73.19" rx="4.3" ry="6" fill="none" stroke="#aaa" stroke-width="1" stroke-dasharray="5 3"/>
<rect x="836.2" y="477.91" width="8.6" height="73.19" rx="4.3" ry="6" fill="none" stroke="#aaa" stroke-width="1" stroke-dasharray="5 3"/>
<path d="M816.6 551.10 H836.2" stroke="#999" stroke-width="1" stroke-dasharray="5 4"/>
<rect x="808" y="568.60" width="8.6" height="29.86" rx="4.3" ry="6" fill="none" stroke="#aaa" stroke-width="1" stroke-dasharray="5 3"/>
<rect x="836.2" y="568.60" width="8.6" height="29.86" rx="4.3" ry="6" fill="none" stroke="#aaa" stroke-width="1" stroke-dasharray="5 3"/>
<path d="M816.6 568.60 H836.2" stroke="#999" stroke-width="1" stroke-dasharray="5 4"/>
<path d="M816.6 598.46 H836.2" stroke="#999" stroke-width="1" stroke-dasharray="5 4"/>
<circle cx="936.3" cy="57.9" r="29.5" fill="rgba(225,225,225,0.55)"/>
<path d="M923.7 46.4 L946.9 70.1 M946.9 46.4 L923.7 70.1" stroke="#8c8f92" stroke-width="4.6" stroke-linecap="round"/>
</g>
</svg>
<div id="bar"></div>
<div class="gap" style="left:257.5px"></div><div class="gap" style="left:418.5px"></div><div class="gap" style="left:580px"></div><div class="gap" style="left:822.5px"></div>
</body></html>
